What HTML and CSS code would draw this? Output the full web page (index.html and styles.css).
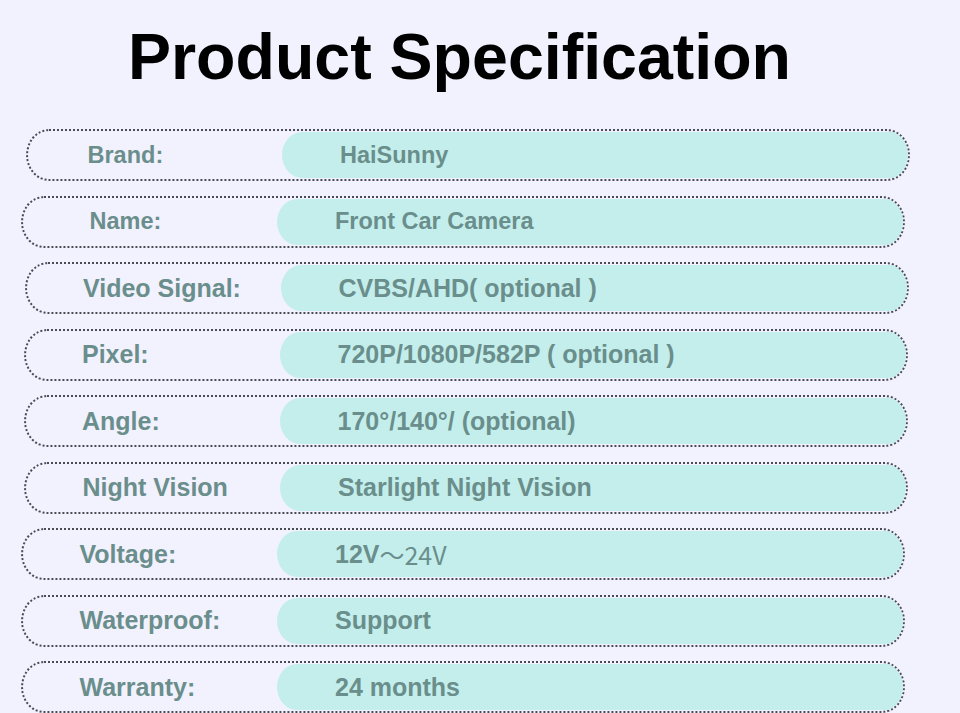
FILE: index.html
```html
<!DOCTYPE html>
<html lang="en">
<head>
<meta charset="utf-8">
<title>Product Specification</title>
<link rel="stylesheet" href="styles.css">
</head>
<body>
<div class="page">
  <header class="header">
    <h1 class="title">Product Specification</h1>
  </header>
  <div class="spec">
    <div class="row row-1 row-small"><div class="label">Brand:</div><div class="value">HaiSunny</div></div>
    <div class="row row-2 row-small"><div class="label">Name:</div><div class="value">Front Car Camera</div></div>
    <div class="row row-3"><div class="label">Video Signal:</div><div class="value">CVBS/AHD( optional )</div></div>
    <div class="row row-4"><div class="label">Pixel:</div><div class="value">720P/1080P/582P ( optional )</div></div>
    <div class="row row-5"><div class="label">Angle:</div><div class="value">170°/140°/ (optional)</div></div>
    <div class="row row-6"><div class="label">Night Vision</div><div class="value">Starlight Night Vision</div></div>
    <div class="row row-7"><div class="label">Voltage:</div><div class="value">12V<span class="cjk">～24V</span></div></div>
    <div class="row row-8"><div class="label">Waterproof:</div><div class="value">Support</div></div>
    <div class="row row-9"><div class="label">Warranty:</div><div class="value">24 months</div></div>
  </div>
</div>
</body>
</html>
```
FILE: styles.css
```css
html, body {
  margin: 0;
  padding: 0;
  background: #f2f2fe;
}

body {
  font-family: "Liberation Sans", Arial, sans-serif;
}

.page {
  width: 960px;
  height: 713px;
  overflow: hidden;
}

.header {
  height: 129.3px;
  box-sizing: border-box;
  padding: 24.7px 0 0 128px;
}

.title {
  margin: 0;
  font-size: 64.5px;
  line-height: 64.5px;
  font-weight: bold;
  color: #000;
  white-space: nowrap;
}

.spec {
  display: flex;
  flex-direction: column;
  gap: 14.3px;
}

.row {
  display: flex;
  align-items: stretch;
  box-sizing: border-box;
  width: 884px;
  height: 52.2px;
  border: 2px dotted #4a4c54;
  border-radius: 23px / 26px;
  overflow: hidden;
  color: #6a8e8c;
  font-weight: bold;
  font-size: 25px;
  white-space: nowrap;
}

.row-small {
  font-size: 23.5px;
}

.row-1 { margin-left: 26px; }
.row-2 { margin-left: 21px; }
.row-3 { margin-left: 24.5px; }
.row-4 { margin-left: 23.5px; }
.row-5 { margin-left: 23.5px; }
.row-6 { margin-left: 24px; }
.row-7 { margin-left: 21px; }
.row-8 { margin-left: 21px; }
.row-9 { margin-left: 21px; }

.label {
  flex: none;
  width: 254px;
  box-sizing: border-box;
  padding-left: 56.5px;
  display: flex;
  align-items: center;
}

.row-1 .label { padding-left: 59.5px; }
.row-2 .label { padding-left: 66.5px; }

.value {
  flex: 1;
  margin: 1px 0;
  background: #c4eeeb;
  border-radius: 20px 0 0 20px / 50% 0 0 50%;
  box-sizing: border-box;
  padding-left: 58px;
  display: flex;
  align-items: center;
}

.cjk {
  font-family: "Noto Sans CJK SC", "Noto Sans", sans-serif;
  font-weight: normal;
}
```
